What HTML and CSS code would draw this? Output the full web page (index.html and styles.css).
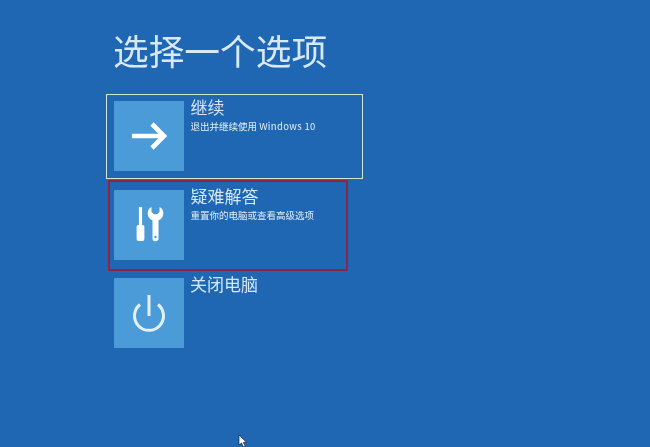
FILE: index.html
```html
<!DOCTYPE html>
<html lang="zh-CN">
<head>
<meta charset="utf-8">
<title>选择一个选项</title>
<link rel="stylesheet" href="styles.css">
</head>
<body>
<main class="screen">
  <h1 class="title">选择一个选项</h1>
  <div class="options">
    <div class="option option-focus">
      <div class="tile">
        <svg viewBox="0 0 70 70" class="icon"><path d="M18 35H50M38 23L50 35L38 47" fill="none" stroke="#fff" stroke-width="4.600"/></svg>
      </div>
      <div class="text">
        <div class="name">继续</div>
        <div class="desc">退出并继续使用 <span class="latin">Windows 10</span></div>
      </div>
    </div>
    <div class="option option-mark">
      <div class="tile">
        <svg viewBox="0 0 70 70" class="icon"><path d="M25.300 17h2.400q.4 0 .4 .5V35h.6q1.700 0 1.700 1.700v12.300q0 2-2 2h-3.800q-2 0-2-2V36.700q0-1.700 1.700-1.700h.6V17.500q0-.5 .4-.5z" fill="#fff"/><path d="M37.500 17c-2.600 1-3.800 3.600-3.800 6.200 0 3.400 1.900 6 4.800 7.100V48.500q0 2.800 2.800 2.800h.4q2.800 0 2.800-2.800V30.300c2.900-1.100 4.800-3.700 4.800-7.100 0-2.600-1.200-5.200-3.800-6.200V22l-2.500 2.200h-3L37.500 22z" fill="#fff"/><circle cx="41.500" cy="47" r="1.200" fill="#4a9bd8"/></svg>
      </div>
      <div class="text">
        <div class="name">疑难解答</div>
        <div class="desc">重置你的电脑或查看高级选项</div>
      </div>
    </div>
    <div class="option option-plain">
      <div class="tile">
        <svg viewBox="0 0 70 70" class="icon"><path d="M26 26.500a14.500 14.500 0 1 0 18 0M35 17V38" fill="none" stroke="#e4f1fa" stroke-width="3"/></svg>
      </div>
      <div class="text">
        <div class="name">关闭电脑</div>
      </div>
    </div>
  </div>
  <svg class="cursor" viewBox="0 0 10 14"><path d="M1 1v10l2.500-2 2 4 1.800-.8-2-3.900H8.500z" fill="#fff" stroke="#123" stroke-width=".7"/></svg>
</main>
</body>
</html>
```
FILE: styles.css
```css
* { box-sizing: border-box; }
html, body { margin: 0; height: 100%; }
body { background: #1f66b3; overflow: hidden; }
.screen {
  position: relative;
  width: 650px;
  height: 447px;
  padding: 24px 0 0 106px;
  color: #dcecf6;
  font-family: "Noto Sans CJK SC", "Noto Sans", sans-serif;
  filter: blur(0.4px);
}
.title {
  margin: 0 0 18px 7px;
  font-size: 35.700px;
  font-weight: 400;
  line-height: 52px;
  color: #d8e9f5;
}
.options { display: flex; flex-direction: column; align-items: flex-start; }
.option { display: flex; align-items: flex-start; }
.option-focus {
  width: 257px;
  height: 85px;
  padding: 5.500px 0 0 6.500px;
  border: 1.500px solid #cfe6cf;
}
.option-mark {
  width: 240px;
  height: 91px;
  margin: 1px 0 0 2px;
  padding: 7.500px 0 0 3.500px;
  border: 2.500px solid #8f2344;
}
.option-plain { margin: 7px 0 0 8px; }
.tile {
  flex: none;
  width: 70px;
  height: 70px;
  background: #4a9bd8;
}
.icon { display: block; width: 70px; height: 70px; }
.text { margin: -6px 0 0 7px; }
.option-plain .text { margin-left: 6px; }
.name {
  font-size: 17px;
  line-height: 24px;
  color: #d5e7f3;
}
.desc {
  font-size: 9.500px;
  line-height: 12px;
  margin-top: 1px;
  color: #e3eff7;
  white-space: nowrap;
}
.latin { letter-spacing: 0.35px; }
.cursor {
  position: absolute;
  left: 238px;
  top: 434px;
  width: 10px;
  height: 14px;
}
```
